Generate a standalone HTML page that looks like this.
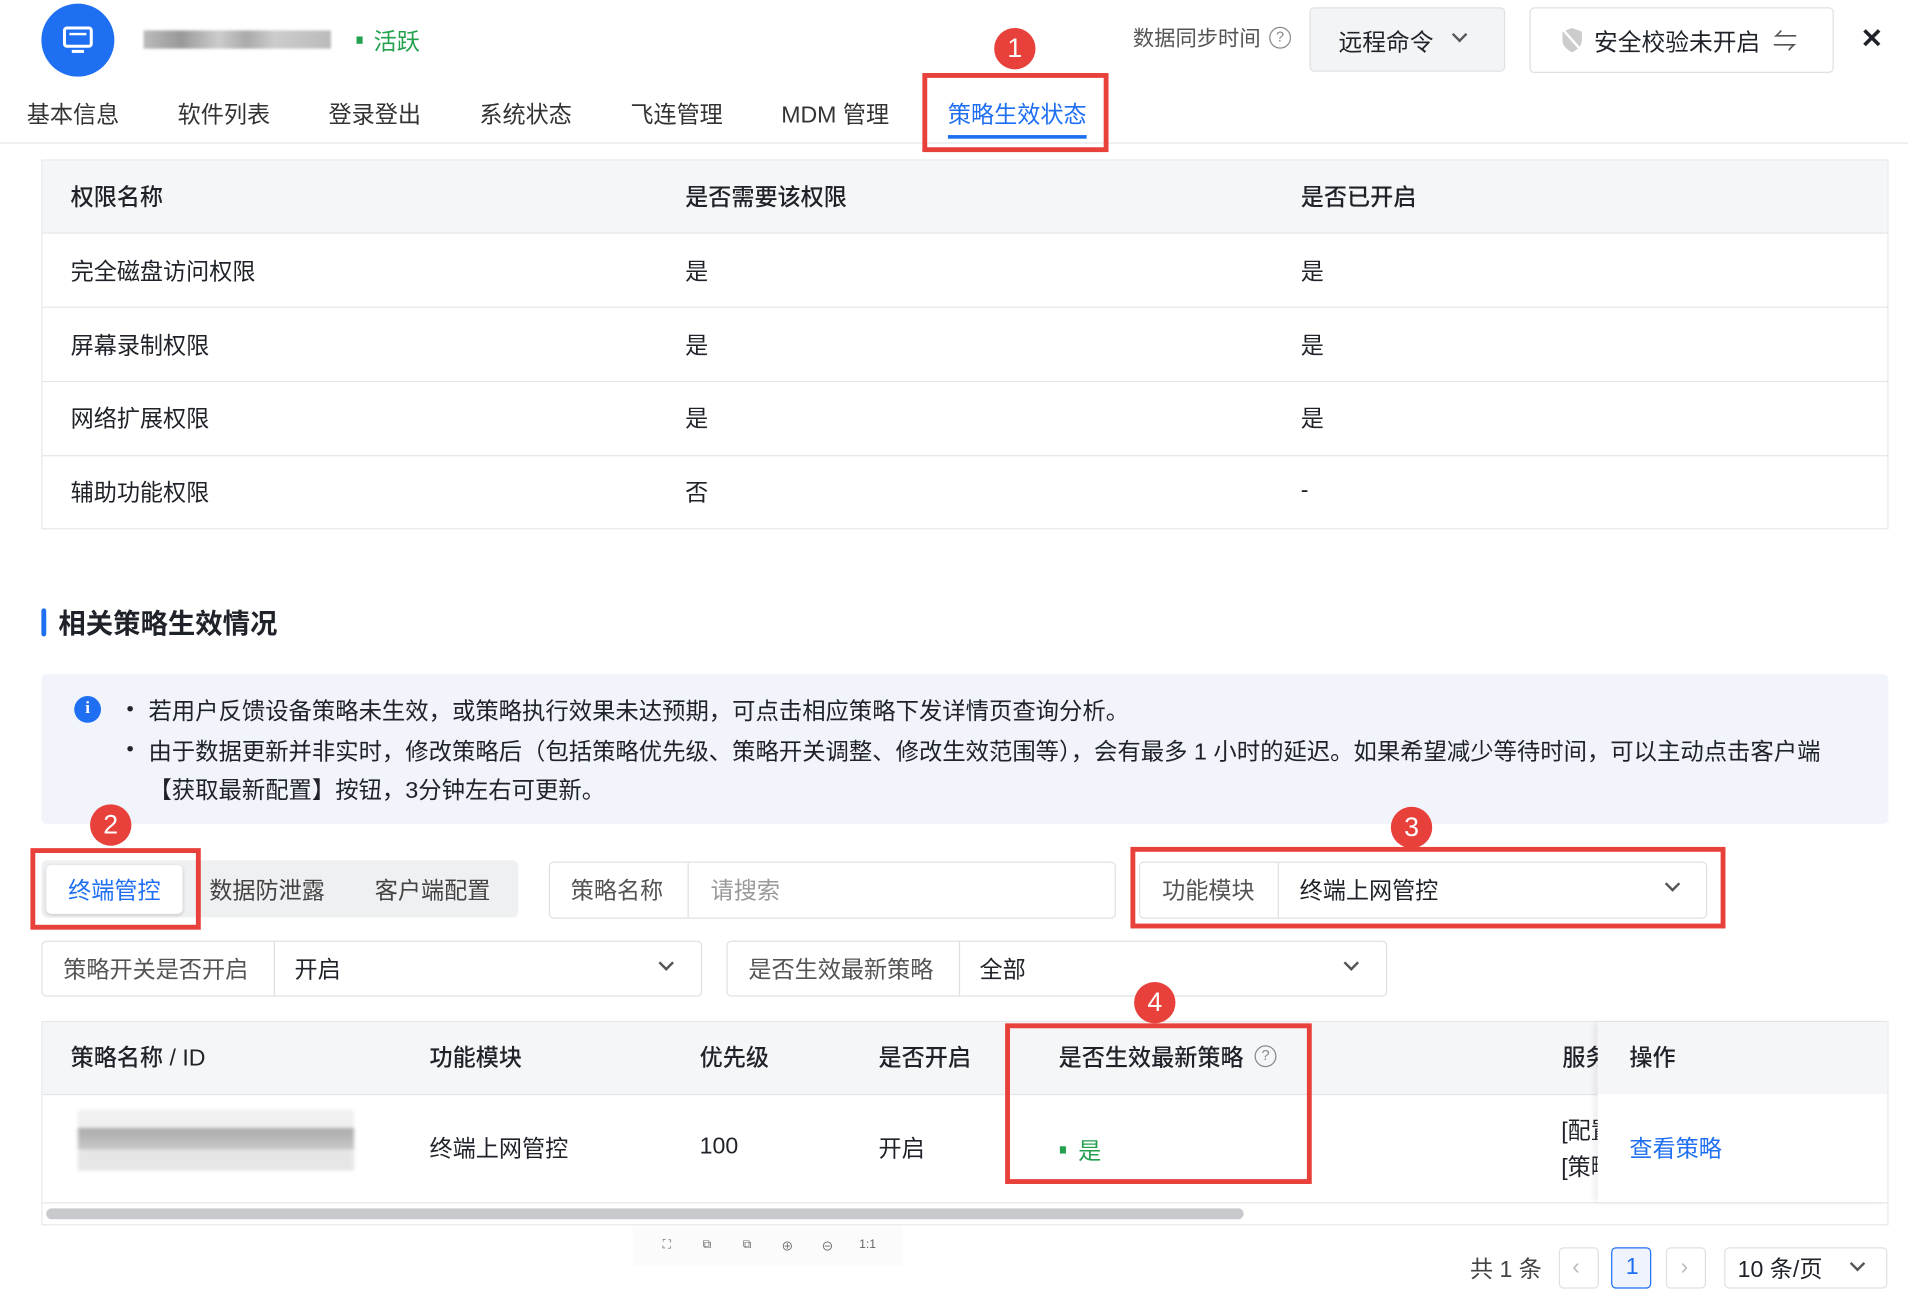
<!DOCTYPE html>
<html><head><meta charset="utf-8"><style>
*{box-sizing:border-box;margin:0;padding:0}
html,body{width:1908px;height:1307px;overflow:hidden;background:#fff}
#w{position:absolute;left:0;top:0;width:1568px;height:1075px;transform:scale(1.21684);transform-origin:0 0;font-family:"Liberation Sans","Noto Sans CJK SC",sans-serif;color:#1f2329;font-size:19px}
.a{position:absolute;white-space:nowrap}
.c{transform:translateY(-50%)}
.red{position:absolute;border:4px solid #e8403a}
.badge{position:absolute;width:34px;height:34px;border-radius:50%;background:#e8403a;color:#fff;font-size:22px;text-align:center;line-height:34px;transform:translate(-50%,-50%)}
.box{position:absolute;border:1px solid #dee0e3;border-radius:4px;background:#fff}
.hd{position:absolute;background:#f5f6f7}
.ln{position:absolute;height:1px;background:#e4e6e9}
.chev{position:absolute;width:9px;height:9px;border-right:2px solid #555;border-bottom:2px solid #555;transform:rotate(45deg)}
.ic{position:absolute;font-size:10px;color:#666;transform:translate(-50%,-50%)}
</style></head><body><div id="w">
<div class="a" style="left:34px;top:3px;width:60px;height:60px;border-radius:50%;background:#1f6ff2"></div>
<svg class="a" style="left:49px;top:18px" width="30" height="30" viewBox="0 0 30 30"><rect x="4" y="5" width="22" height="15" rx="2" fill="none" stroke="#fff" stroke-width="2.5"/><rect x="8" y="9" width="14" height="2" fill="#fff"/><rect x="10" y="23" width="10" height="2.5" fill="#fff"/></svg>
<div class="a" style="left:118px;top:25px;width:154px;height:15px;background:linear-gradient(90deg,#bbb,#999 20%,#ccc 40%,#aaa 55%,#ccc 70%,#bbb);filter:blur(1px)"></div>
<div class="a" style="left:293px;top:30px;width:5px;height:6px;background:#23a14f"></div>
<div class="a c" style="left:307px;top:33px;color:#23a14f">活跃</div>
<div class="a c" style="left:931px;top:31px;color:#555;font-size:17.5px">数据同步时间</div>
<div class="a" style="left:1043px;top:22px;width:18px;height:18px;border:1.5px solid #888;border-radius:50%;font-size:12px;text-align:center;line-height:15px;color:#888">?</div>
<div class="box" style="left:1076px;top:6px;width:161px;height:53px;background:#f3f4f6"></div>
<div class="a c" style="left:1100px;top:33px;font-size:19.5px">远程命令</div>
<div class="chev" style="left:1195px;top:24px"></div>
<div class="box" style="left:1257px;top:6px;width:250px;height:54px"></div>
<svg class="a" style="left:1282px;top:22px" width="20" height="22" viewBox="0 0 20 22"><path d="M10 1L2 4v7c0 5 4 8 8 10 4-2 8-5 8-10V4z" fill="#ccc"/><path d="M3 3l15 17" stroke="#fff" stroke-width="2"/></svg>
<div class="a c" style="left:1310px;top:33px;font-size:19.5px">安全校验未开启</div>
<div class="a c" style="left:1457px;top:32px;font-size:20px;color:#555">⇋</div>
<div class="a c" style="left:1529px;top:32px;font-size:22px;font-weight:bold">✕</div>
<div class="a c" style="left:22px;top:93px;color:#333">基本信息</div>
<div class="a c" style="left:146px;top:93px;color:#333">软件列表</div>
<div class="a c" style="left:270px;top:93px;color:#333">登录登出</div>
<div class="a c" style="left:394px;top:93px;color:#333">系统状态</div>
<div class="a c" style="left:518px;top:93px;color:#333">飞连管理</div>
<div class="a c" style="left:642px;top:93px;color:#333">MDM 管理</div>
<div class="a c" style="left:779px;top:93px;color:#1f6ff2">策略生效状态</div>
<div class="a" style="left:779px;top:111px;width:114px;height:3px;background:#1f6ff2"></div>
<div class="ln" style="left:0;top:117px;width:1568px"></div>
<div class="red" style="left:758px;top:60px;width:153px;height:65px"></div>
<div class="badge" style="left:834px;top:40px">1</div>
<div class="box" style="left:34px;top:131px;width:1518px;height:304px;border-radius:0;border-color:#e6e8eb"></div>
<div class="hd" style="left:35px;top:132px;width:1516px;height:59px"></div>
<div class="ln" style="left:34px;top:191px;width:1518px"></div>
<div class="ln" style="left:34px;top:252px;width:1518px"></div>
<div class="ln" style="left:34px;top:313px;width:1518px"></div>
<div class="ln" style="left:34px;top:374px;width:1518px"></div>
<div class="a c" style="left:58px;top:161px;font-weight:500">权限名称</div>
<div class="a c" style="left:563px;top:161px;font-weight:500">是否需要该权限</div>
<div class="a c" style="left:1069px;top:161px;font-weight:500">是否已开启</div>
<div class="a c" style="left:58px;top:222px">完全磁盘访问权限</div><div class="a c" style="left:563px;top:222px">是</div><div class="a c" style="left:1069px;top:222px">是</div>
<div class="a c" style="left:58px;top:283px">屏幕录制权限</div><div class="a c" style="left:563px;top:283px">是</div><div class="a c" style="left:1069px;top:283px">是</div>
<div class="a c" style="left:58px;top:343px">网络扩展权限</div><div class="a c" style="left:563px;top:343px">是</div><div class="a c" style="left:1069px;top:343px">是</div>
<div class="a c" style="left:58px;top:404px">辅助功能权限</div><div class="a c" style="left:563px;top:404px">否</div><div class="a c" style="left:1069px;top:404px">-</div>
<div class="a" style="left:34px;top:500px;width:4px;height:23px;background:#1f6ff2;border-radius:2px"></div>
<div class="a c" style="left:48px;top:511px;font-size:22.5px;font-weight:bold">相关策略生效情况</div>
<div class="a" style="left:34px;top:554px;width:1518px;height:123px;background:#f1f4fb;border-radius:4px"></div>
<div class="a" style="left:61px;top:572px;width:22px;height:22px;border-radius:50%;background:#1f6ff2;color:#fff;font-size:14px;font-weight:bold;text-align:center;line-height:22px;font-family:'Liberation Serif',serif">i</div>
<div class="a c" style="left:104px;top:583px;font-size:17px">•</div>
<div class="a c" style="left:122px;top:583px;font-size:19.2px">若用户反馈设备策略未生效，或策略执行效果未达预期，可点击相应策略下发详情页查询分析。</div>
<div class="a c" style="left:104px;top:616px;font-size:17px">•</div>
<div class="a c" style="left:122px;top:616px;font-size:19.2px">由于数据更新并非实时，修改策略后（包括策略优先级、策略开关调整、修改生效范围等），会有最多 1 小时的延迟。如果希望减少等待时间，可以主动点击客户端</div>
<div class="a c" style="left:122px;top:648px;font-size:19.2px">【获取最新配置】按钮，3分钟左右可更新。</div>
<div class="a" style="left:34px;top:707px;width:392px;height:47px;background:#eff0f2;border-radius:5px"></div>
<div class="a" style="left:38px;top:711px;width:112px;height:40px;background:#fff;border-radius:4px;box-shadow:0 1px 3px rgba(0,0,0,.15)"></div>
<div class="a c" style="left:56px;top:731px;color:#1f6ff2">终端管控</div>
<div class="a c" style="left:172px;top:731px;color:#444">数据防泄露</div>
<div class="a c" style="left:308px;top:731px;color:#444">客户端配置</div>
<div class="red" style="left:25px;top:697px;width:140px;height:67px"></div>
<div class="badge" style="left:91px;top:678px">2</div>
<div class="box" style="left:451px;top:708px;width:466px;height:47px"></div>
<div class="a" style="left:565px;top:709px;width:1px;height:45px;background:#dee0e3"></div>
<div class="a c" style="left:469px;top:731px;color:#555">策略名称</div>
<div class="a c" style="left:584px;top:731px;color:#999">请搜索</div>
<div class="box" style="left:936px;top:708px;width:467px;height:47px"></div>
<div class="a" style="left:1050px;top:709px;width:1px;height:45px;background:#dee0e3"></div>
<div class="a c" style="left:955px;top:731px;color:#555">功能模块</div>
<div class="a c" style="left:1068px;top:731px">终端上网管控</div>
<div class="chev" style="left:1370px;top:722px"></div>
<div class="red" style="left:929px;top:696px;width:489px;height:67px"></div>
<div class="badge" style="left:1160px;top:680px">3</div>
<div class="box" style="left:34px;top:773px;width:543px;height:46px"></div>
<div class="a" style="left:225px;top:774px;width:1px;height:44px;background:#dee0e3"></div>
<div class="a c" style="left:52px;top:796px;color:#555">策略开关是否开启</div>
<div class="a c" style="left:242px;top:796px">开启</div>
<div class="chev" style="left:543px;top:787px"></div>
<div class="box" style="left:597px;top:773px;width:543px;height:46px"></div>
<div class="a" style="left:788px;top:774px;width:1px;height:44px;background:#dee0e3"></div>
<div class="a c" style="left:615px;top:796px;color:#555">是否生效最新策略</div>
<div class="a c" style="left:805px;top:796px">全部</div>
<div class="chev" style="left:1106px;top:787px"></div>
<div class="box" style="left:34px;top:839px;width:1518px;height:168px;border-radius:0;border-color:#e6e8eb"></div>
<div class="hd" style="left:35px;top:840px;width:1516px;height:59px"></div>
<div class="ln" style="left:34px;top:899px;width:1518px"></div>
<div class="ln" style="left:34px;top:988px;width:1518px"></div>
<div class="a" style="left:1313px;top:840px;width:238px;height:148px;background:#fff;box-shadow:-3px 0 5px rgba(0,0,0,.07)"></div>
<div class="a" style="left:1313px;top:840px;width:238px;height:59px;background:#f5f6f7"></div>
<div class="a c" style="left:58px;top:868px;font-weight:500">策略名称 / ID</div>
<div class="a c" style="left:353px;top:868px;font-weight:500">功能模块</div>
<div class="a c" style="left:575px;top:868px;font-weight:500">优先级</div>
<div class="a c" style="left:722px;top:868px;font-weight:500">是否开启</div>
<div class="a c" style="left:870px;top:868px;font-weight:500">是否生效最新策略</div>
<div class="a" style="left:1031px;top:859px;width:18px;height:18px;border:1.5px solid #888;border-radius:50%;font-size:12px;text-align:center;line-height:15px;color:#888">?</div>
<div class="a c" style="left:1284px;top:868px;font-weight:500;width:29px;overflow:hidden">服务</div>
<div class="a c" style="left:1339px;top:868px;font-weight:500">操作</div>
<div class="a" style="left:64px;top:912px;width:227px;height:50px;background:linear-gradient(180deg,#f0f0f0 0,#f0f0f0 30%,#aaa 30%,#c8c8c8 65%,#e6e6e6 65%);filter:blur(1.5px)"></div>
<div class="a c" style="left:353px;top:943px">终端上网管控</div>
<div class="a c" style="left:575px;top:943px">100</div>
<div class="a c" style="left:722px;top:943px">开启</div>
<div class="a" style="left:871px;top:942px;width:5px;height:6px;background:#23a14f"></div>
<div class="a c" style="left:886px;top:945px;color:#23a14f">是</div>
<div class="a c" style="left:1283px;top:928px;width:30px;overflow:hidden">[配置</div>
<div class="a c" style="left:1283px;top:958px;width:30px;overflow:hidden">[策略</div>
<div class="a c" style="left:1339px;top:943px;color:#1f6ff2">查看策略</div>
<div class="a" style="left:38px;top:993px;width:984px;height:9px;background:#c8c9cc;border-radius:5px"></div>
<div class="red" style="left:826px;top:841px;width:252px;height:132px"></div>
<div class="badge" style="left:949px;top:824px">4</div>
<div class="a" style="left:520px;top:1008px;width:222px;height:32px;background:#fbfbfc"></div>
<div class="ic" style="left:548px;top:1023px">⛶</div>
<div class="ic" style="left:581px;top:1023px">⧉</div>
<div class="ic" style="left:614px;top:1023px">⧉</div>
<div class="ic" style="left:647px;top:1023px">⊕</div>
<div class="ic" style="left:680px;top:1023px">⊖</div>
<div class="ic" style="left:713px;top:1023px">1:1</div>
<div class="a c" style="left:1208px;top:1042px;color:#444">共 1 条</div>
<div class="box" style="left:1281px;top:1025px;width:33px;height:34px"></div>
<div class="a c" style="left:1292px;top:1042px;color:#bbb">‹</div>
<div class="box" style="left:1324px;top:1025px;width:33px;height:34px;border-color:#1f6ff2;background:#eef3fe"></div>
<div class="a c" style="left:1336px;top:1042px;color:#1f6ff2">1</div>
<div class="box" style="left:1369px;top:1025px;width:33px;height:34px"></div>
<div class="a c" style="left:1381px;top:1042px;color:#bbb">›</div>
<div class="box" style="left:1417px;top:1025px;width:134px;height:34px"></div>
<div class="a c" style="left:1428px;top:1042px">10 条/页</div>
<div class="chev" style="left:1522px;top:1034px"></div>
</div></body></html>
